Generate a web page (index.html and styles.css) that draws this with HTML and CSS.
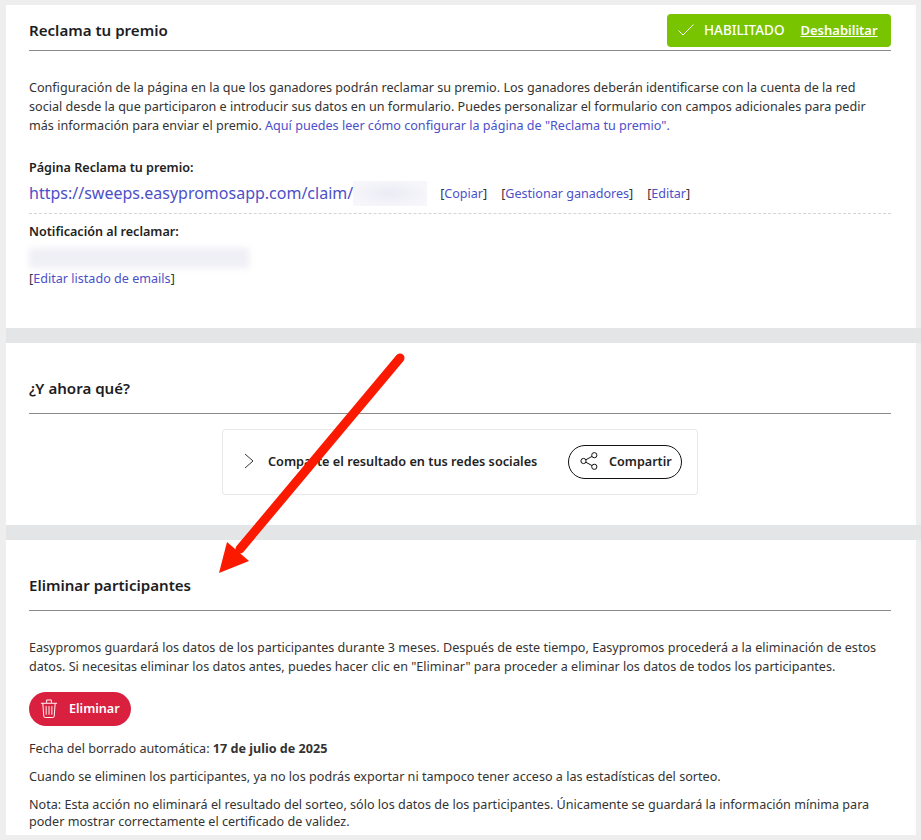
FILE: index.html
```html
<!DOCTYPE html>
<html lang="en">
<head>
  <meta charset="UTF-8" />
  <title>Reclama tu premio</title>
  <link rel="stylesheet" href="styles.css">
</head>
<body>
  <div class="frame">
    <section class="panel panel-claim">
      <div class="panel-head head-claim">
        <h2>Reclama tu premio</h2>
        <div class="enabled">
          <svg width="16" height="12" viewBox="0 0 16 12"><path d="M0.5 6.5 L5 11 L15.5 0.5" fill="none" stroke="#fff" stroke-width="1"/></svg>
          <span class="enabled-text">HABILITADO</span>
          <a href="#" class="enabled-link">Deshabilitar</a>
        </div>
      </div>
      <p class="intro">Configuración de la página en la que los ganadores podrán reclamar su premio. Los ganadores deberán identificarse con la cuenta de la red<br>social desde la que participaron e introducir sus datos en un formulario. Puedes personalizar el formulario con campos adicionales para pedir<br>más información para enviar el premio. <a href="#">Aquí puedes leer cómo configurar la página de "Reclama tu premio".</a></p>
      <div class="label label-page">Página Reclama tu premio:</div>
      <div class="url-row">
        <a href="#" class="url">https://sweeps.easypromosapp.com/claim/</a>
        <span class="blur blur-url"></span>
        <span class="actions">
          <span>[<a href="#">Copiar</a>]</span>
          <span>[<a href="#">Gestionar ganadores</a>]</span>
          <span>[<a href="#">Editar</a>]</span>
        </span>
      </div>
      <div class="label label-notify">Notificación al reclamar:</div>
      <div class="blur blur-mail"></div>
      <div class="edit-mails">[<a href="#">Editar listado de emails</a>]</div>
    </section>

    <section class="panel panel-next">
      <div class="panel-head head-next">
        <h2>¿Y ahora qué?</h2>
      </div>
      <div class="share-card">
        <svg class="chevron" width="10" height="16" viewBox="0 0 10 16"><path d="M1 1 L9 8 L1 15" fill="none" stroke="#333" stroke-width="1"/></svg>
        <span class="share-text">Comparte el resultado en tus redes sociales</span>
        <button class="share-btn">
          <svg width="18" height="18" viewBox="0 0 18 18" fill="none" stroke="#111" stroke-width="1"><circle cx="3.5" cy="9" r="2.6"/><circle cx="14.3" cy="3.2" r="2.6"/><circle cx="14.3" cy="14.8" r="2.6"/><path d="M5.8 7.8 L12 4.4 M5.8 10.2 L12 13.6"/></svg>
          Compartir
        </button>
      </div>
    </section>

    <section class="panel panel-delete">
      <div class="panel-head head-delete">
        <h2>Eliminar participantes</h2>
      </div>
      <p class="delete-intro">Easypromos guardará los datos de los participantes durante 3 meses. Después de este tiempo, Easypromos procederá a la eliminación de estos<br>datos. Si necesitas eliminar los datos antes, puedes hacer clic en "Eliminar" para proceder a eliminar los datos de todos los participantes.</p>
      <button class="delete-btn">
        <svg width="18" height="19" viewBox="0 0 18 20" fill="none" stroke="#fff" stroke-width="1"><path d="M0.5 4.5 H17.5 M6.5 4 V1 H11.5 V4 M2.5 4.5 L3.5 18 Q3.6 19.5 5 19.5 H13 Q14.4 19.5 14.5 18 L15.5 4.5 M6 7.5 V16.5 M9 7.5 V16.5 M12 7.5 V16.5"/></svg>
        Eliminar
      </button>
      <p class="note note-date">Fecha del borrado automática: <b>17 de julio de 2025</b></p>
      <p class="note note-stats">Cuando se eliminen los participantes, ya no los podrás exportar ni tampoco tener acceso a las estadísticas del sorteo.</p>
      <p class="note note-last">Nota: Esta acción no eliminará el resultado del sorteo, sólo los datos de los participantes. Únicamente se guardará la información mínima para<br>poder mostrar correctamente el certificado de validez.</p>
    </section>

    <svg class="arrow" width="921" height="840" viewBox="0 0 921 840">
      <path d="M400 358 L240 549" fill="none" stroke="#fb1a00" stroke-width="9" stroke-linecap="round"/>
      <path d="M219 573 L227 542 L249 561 Z" fill="#fb1a00"/>
    </svg>
  </div>
</body>
</html>
```

FILE: styles.css
```css
* {
  box-sizing: border-box;
}

body {
  margin: 0;
  font-family: "Noto Sans", Arial, sans-serif;
  font-size: 12.6px;
  color: #333;
  background-color: #fff;
}

a {
  color: #4d4fc9;
  text-decoration: none;
}

.frame {
  position: relative;
  width: 921px;
  height: 840px;
  padding: 5px 5px 5px 6px;
  background-color: #eeeeee;
  background-image: linear-gradient(#e4e5e7, #e4e5e7), linear-gradient(#e4e5e7, #e4e5e7);
  background-repeat: no-repeat;
  background-size: 915px 15px;
  background-position: 6px 328px, 6px 525px;
  overflow: hidden;
}

.panel {
  background-color: #fff;
  padding: 0 25px 0 23px;
}

.panel-claim {
  height: 323px;
}

.panel-next {
  height: 182px;
  margin-top: 15px;
}

.panel-delete {
  height: 295px;
  margin-top: 15px;
}

.panel-head {
  display: flex;
  align-items: center;
  justify-content: space-between;
  border-bottom: 1px solid #8a8a8a;
}

.panel-head h2 {
  margin: 0;
  font-size: 15.1px;
  font-weight: 600;
  color: #1d1d1f;
}

.head-claim {
  height: 46px;
  padding-top: 5px;
}

.head-next,
.head-delete {
  height: 71px;
  padding-top: 20px;
}

.enabled {
  display: flex;
  align-items: center;
  align-self: flex-end;
  width: 224px;
  height: 33px;
  margin-bottom: 3px;
  padding: 0 0 2px 11px;
  background-color: #78c400;
  border-radius: 4px;
  color: #fff;
  font-size: 13px;
  font-weight: 600;
}

.enabled-text {
  margin-left: 10px;
  font-size: 13.5px;
  font-weight: 500;
}

.enabled-link {
  margin-left: 16px;
  color: #fff;
  text-decoration: underline;
}

.intro {
  margin: 27px 0 0;
  line-height: 19px;
}

.label {
  font-weight: 600;
  color: #222;
}

.label-page {
  margin-top: 24px;
}

.url-row {
  display: flex;
  align-items: center;
  height: 37px;
  margin-top: 1px;
  border-bottom: 1px dashed #d4d4d4;
  padding-bottom: 4px;
}

.url {
  font-size: 16px;
}

.blur {
  display: block;
  background-color: #efeff6;
}

.blur-url {
  width: 74px;
  height: 25px;
  background: radial-gradient(ellipse at center, #ebebf5, #f7f7fb 85%);
}

.actions {
  display: flex;
  gap: 14px;
  margin-left: 13px;
  letter-spacing: -0.02px;
}

.label-notify {
  margin-top: 9px;
}

.blur-mail {
  width: 220px;
  height: 20px;
  margin: 8px 0 0 0;
  filter: blur(3px);
}

.edit-mails {
  margin-top: 2px;
}

.share-card {
  display: flex;
  align-items: center;
  width: 476px;
  height: 66px;
  margin: 15px 0 0 193px;
  padding: 0 15px 2px 21px;
  border: 1px solid #e8e8e8;
  border-radius: 3px;
}

.chevron {
  flex: none;
}

.share-text {
  margin-left: 14px;
  font-size: 12.7px;
  font-weight: 600;
  color: #222;
}

.share-btn {
  display: flex;
  align-items: center;
  gap: 11px;
  width: 114px;
  height: 34px;
  margin: 2px 0 0 auto;
  padding: 0 0 2px 11px;
  border: 1px solid #111;
  border-radius: 17px;
  background-color: #fff;
  font: 600 12.6px "Noto Sans", Arial, sans-serif;
  color: #222;
}

.delete-intro {
  margin: 27px 0 0;
  line-height: 19px;
}

.delete-btn {
  display: flex;
  align-items: center;
  gap: 11px;
  width: 102px;
  height: 34px;
  margin-top: 16px;
  padding: 0 0 2px 11px;
  border: none;
  border-radius: 17px;
  background-color: #d9213f;
  color: #fff;
  font: 600 12.6px "Noto Sans", Arial, sans-serif;
}

.note {
  margin: 0;
  line-height: 17px;
}

.note-date {
  margin-top: 14px;
}

.note-stats,
.note-last {
  margin-top: 11px;
}

.arrow {
  position: absolute;
  top: 0;
  left: 0;
  pointer-events: none;
}
```
